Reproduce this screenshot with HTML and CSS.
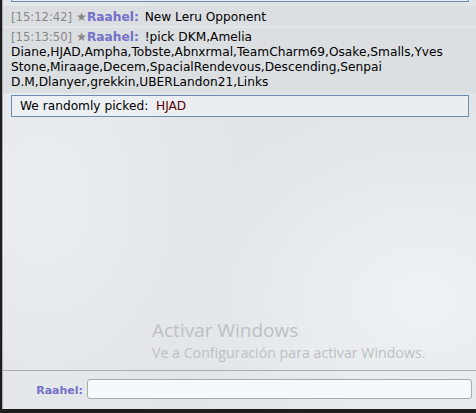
FILE: index.html
```html
<!DOCTYPE html>
<html lang="en">
  <head>
    <meta charset="UTF-8" />
    <meta name="viewport" content="width=device-width, initial-scale=1.0" />
    <title>Lobby</title>
    <link rel="stylesheet" href="styles.css">
  </head>
  <body>
    <div class="room">
      <div class="chat-log">
        <div class="infobox-tail"></div>

        <div class="chat first">
          <small class="time">[15:12:42]</small> <span class="rank">★</span><strong class="name">Raahel:</strong>
          <em class="msg">New Leru Opponent</em>
        </div>

        <div class="chat">
          <small class="time">[15:13:50]</small> <span class="rank">★</span><strong class="name">Raahel:</strong>
          <em class="msg">!pick DKM,Amelia Diane,HJAD,Ampha,Tobste,Abnxrmal,TeamCharm69,Osake,Smalls,Yves Stone,Miraage,Decem,SpacialRendevous,Descending,Senpai D.M,Dlanyer,grekkin,UBERLandon21,Links</em>
        </div>

        <div class="infobox">We randomly picked:&nbsp; <span class="pick">HJAD</span></div>
      </div>

      <div class="watermark">
        <div class="watermark-title">Activar Windows</div>
        <div class="watermark-sub">Ve a Configuración para activar Windows.</div>
      </div>

      <div class="chat-form">
        <label class="form-name">Raahel:</label>
        <div class="textbox"></div>
      </div>
    </div>
    <div class="taskbar"></div>
  </body>
</html>
```

FILE: styles.css
```css
body {
  margin: 0;
  height: 413px;
  overflow: hidden;
  background: #1e1e1e;
  font-family: "DejaVu Sans", Verdana, sans-serif;
  font-size: 12.2px;
}

.room {
  position: relative;
  height: 409px;
  margin-left: 2px;
  border-left: 1px solid #a9adb1;
  display: flex;
  flex-direction: column;
  background:
    radial-gradient(ellipse 260px 200px at 420px 300px, rgba(245, 248, 250, 0.7), rgba(245, 248, 250, 0)),
    radial-gradient(ellipse 200px 260px at 40px 200px, rgba(245, 248, 250, 0.5), rgba(245, 248, 250, 0)),
    #e1e5e8;
}

.chat-log {
  flex: 1;
  border-bottom: 1px solid #a9adb1;
}

.infobox-tail {
  height: 1px;
  margin: 0 7px 4px 8px;
  border: 1px solid #6c8cb4;
  border-top: none;
  background: rgba(240, 244, 247, 0.6);
}

.chat {
  padding: 2px 8px 3px;
  margin-bottom: 2px;
  line-height: 15px;
  background: #dcdfe2;
  color: #000;
}

.chat.first {
  padding: 4px 8px 1px;
}

.time {
  font-size: 11.6px;
  color: #888;
}

.rank {
  color: #888;
}

.name {
  color: #7370c9;
}

.msg {
  font-style: normal;
  margin-left: 2px;
}

.infobox {
  margin: 2px 7px 0 8px;
  padding: 3px 8px 2px;
  line-height: 15px;
  border: 1px solid #6c8cb4;
  background: rgba(240, 244, 247, 0.6);
  color: #000;
}

.pick {
  color: #5a0000;
}

.watermark {
  position: absolute;
  left: 149px;
  top: 318px;
  font-family: "Open Sans", "Noto Sans", sans-serif;
  color: #bcc0c3;
}

.watermark-title {
  font-size: 19px;
  line-height: 25px;
}

.watermark-sub {
  font-size: 14.2px;
  line-height: 20px;
}

.chat-form {
  height: 38px;
  display: flex;
  align-items: center;
}

.form-name {
  width: 80px;
  text-align: right;
  font-size: 11px;
  font-weight: bold;
  color: #7370c9;
}

.textbox {
  flex: 1;
  height: 18px;
  margin: 0 4px 2px 4px;
  border: 1px solid #a7abae;
  border-radius: 3px;
  background: #f6f9fc;
}

.taskbar {
  height: 4px;
}
```
